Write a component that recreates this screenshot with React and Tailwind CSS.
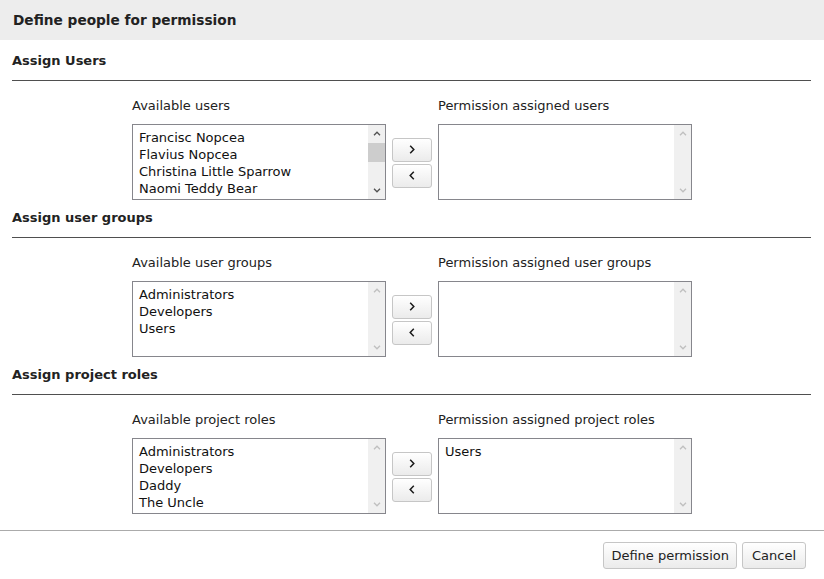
import React from 'react'

const sections = [
  {
    title: 'Assign Users',
    left: 'Available users',
    right: 'Permission assigned users',
    available: ['Francisc Nopcea', 'Flavius Nopcea', 'Christina Little Sparrow', 'Naomi Teddy Bear'],
    assigned: [],
    scroll: true,
  },
  {
    title: 'Assign user groups',
    left: 'Available user groups',
    right: 'Permission assigned user groups',
    available: ['Administrators', 'Developers', 'Users'],
    assigned: [],
    scroll: false,
  },
  {
    title: 'Assign project roles',
    left: 'Available project roles',
    right: 'Permission assigned project roles',
    available: ['Administrators', 'Developers', 'Daddy', 'The Uncle'],
    assigned: ['Users'],
    scroll: false,
  },
]

function Chevron({ up, active }) {
  return (
    <svg width="8" height="5" viewBox="0 0 8 5" className="block">
      <path
        d={up ? 'M1 4.2 L4 1.2 L7 4.2' : 'M1 0.8 L4 3.8 L7 0.8'}
        fill="none"
        stroke={active ? '#505050' : '#bfbfbf'}
        strokeWidth="1.3"
      />
    </svg>
  )
}

function ListBox({ items, scroll }) {
  return (
    <div className="w-[254px] h-[76px] border border-[#86868c] bg-white flex">
      <div className="flex-1 pl-[6px] pt-[4px] leading-[17px] text-[13px] text-[#111]">
        {items.map(i => (
          <div key={i} className="whitespace-nowrap">{i}</div>
        ))}
      </div>
      {/* fake scrollbar */}
      <div className="w-[17px] bg-[#f0f0f0] flex flex-col items-center">
        <div className="h-[17px] flex items-center justify-center">
          <Chevron up active={scroll} />
        </div>
        <div className="flex-1 w-full">
          {scroll && <div className="mt-[1px] h-[19px] w-full bg-[#cdcdcd]" />}
        </div>
        <div className="h-[17px] flex items-center justify-center">
          <Chevron active={scroll} />
        </div>
      </div>
    </div>
  )
}

function MoveButton({ dir }) {
  return (
    <button className="w-[40px] h-[24px] rounded-[3px] border border-[#c6c6c6] bg-gradient-to-b from-white to-[#ebebeb] flex items-center justify-center">
      <svg width="6" height="9" viewBox="0 0 6 9" className="block">
        <path
          d={dir === 'right' ? 'M1.2 0.8 L4.8 4.5 L1.2 8.2' : 'M4.8 0.8 L1.2 4.5 L4.8 8.2'}
          fill="none"
          stroke="#1a1a1a"
          strokeWidth="1.5"
        />
      </svg>
    </button>
  )
}

function Section({ s, first }) {
  return (
    <div className={first ? 'pt-[11px]' : 'pt-[8px]'}>
      <h2 className="px-[12px] text-[13px] font-bold leading-[20px] text-[#222]">{s.title}</h2>
      <div className="ml-[12px] mr-[13px] mt-[9px] h-px bg-[#4f4f4f]" />
      <div className="pl-[132px] mt-[16px] flex">
        <div className="w-[306px] leading-[17px] text-[13px] text-[#222]">{s.left}</div>
        <div className="leading-[17px] text-[13px] text-[#222]">{s.right}</div>
      </div>
      <div className="pl-[132px] mt-[10px] flex items-center gap-[6px]">
        <ListBox items={s.available} scroll={s.scroll} />
        <div className="flex flex-col gap-[2px] pt-[1px]">
          <MoveButton dir="right" />
          <MoveButton dir="left" />
        </div>
        <ListBox items={s.assigned} scroll={false} />
      </div>
    </div>
  )
}

export default function App() {
  return (
    <div className="w-[824px] h-[579px] bg-white overflow-hidden" style={{ fontFamily: '"DejaVu Sans", Verdana, sans-serif' }}>
      <div className="h-[40px] bg-[#ededed] px-[13px] flex items-center">
        <h1 className="text-[13.7px] font-bold text-[#222]">Define people for permission</h1>
      </div>

      {sections.map((s, i) => (
        <Section key={s.title} s={s} first={i === 0} />
      ))}

      {/* Footer */}
      <div className="mt-[16px] border-t border-[#ababab] flex justify-end gap-[5px] pr-[18px] pt-[11px]">
        <button className="h-[27px] px-[7px] rounded-[3px] border border-[#c6c6c6] bg-gradient-to-b from-white to-[#ebebeb] text-[13px] text-[#222]">
          Define permission
        </button>
        <button className="h-[27px] px-[9px] rounded-[3px] border border-[#c6c6c6] bg-gradient-to-b from-white to-[#ebebeb] text-[13px] text-[#222]">
          Cancel
        </button>
      </div>
    </div>
  )
}
